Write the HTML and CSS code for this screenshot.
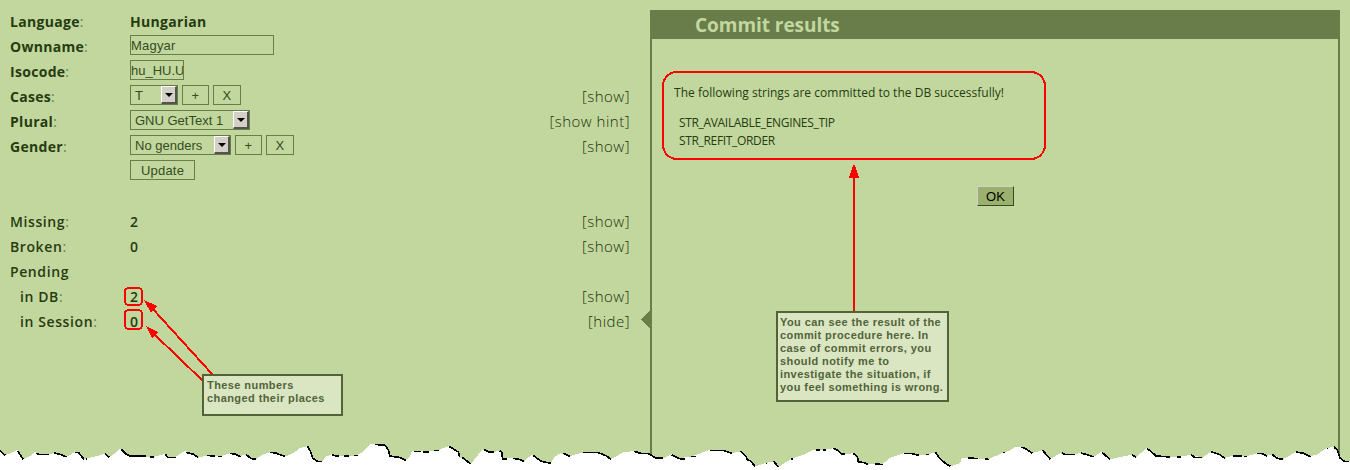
FILE: index.html
```
<!DOCTYPE html>
<html lang="en">
<head>
<meta charset="utf-8">
<title>Commit results</title>
<link rel="stylesheet" href="styles.css">
</head>
<body>
<div class="page">
  <main class="info">
    <div class="row strong"><span class="label"><b>Language</b>:</span><span class="value">Hungarian</span></div>
    <div class="row strong"><span class="label"><b>Ownname</b>:</span><span class="controls"><span class="field own">Magyar</span></span></div>
    <div class="row strong"><span class="label"><b>Isocode</b>:</span><span class="controls"><span class="field iso">hu_HU.U</span></span></div>
    <div class="row strong"><span class="label"><b>Cases</b>:</span><span class="controls"><span class="select cases">T<i class="drop"></i></span><span class="btn plus">+</span><span class="btn cross">X</span></span><a class="link">[show]</a></div>
    <div class="row strong"><span class="label"><b>Plural</b>:</span><span class="controls"><span class="select plural">GNU GetText 1<i class="drop"></i></span></span><a class="link">[show hint]</a></div>
    <div class="row strong"><span class="label"><b>Gender</b>:</span><span class="controls"><span class="select gender">No genders<i class="drop"></i></span><span class="btn plus">+</span><span class="btn cross">X</span></span><a class="link">[show]</a></div>
    <div class="row"><span class="label"></span><span class="controls"><span class="btn update">Update</span></span></div>
    <div class="row"></div>
    <div class="row"><span class="label"><b>Missing</b>:</span><span class="value">2</span><a class="link">[show]</a></div>
    <div class="row"><span class="label"><b>Broken</b>:</span><span class="value">0</span><a class="link">[show]</a></div>
    <div class="row"><span class="label"><b>Pending</b></span></div>
    <div class="row"><span class="label sub"><b>in DB</b>:</span><span class="value">2</span><a class="link">[show]</a></div>
    <div class="row"><span class="label sub"><b>in Session</b>:</span><span class="value">0</span><a class="link">[hide]</a></div>
  </main>
  <section class="panel">
    <h1 class="panel-title"><span>Commit results</span></h1>
    <div class="panel-body">
      <p class="message">The following strings are committed to the DB successfully!</p>
      <ul class="strings">
        <li>STR_AVAILABLE_ENGINES_TIP</li>
        <li>STR_REFIT_ORDER</li>
      </ul>
      <span class="ok">OK</span>
    </div>
  </section>

  <svg class="marks" width="1350" height="470" viewBox="0 0 1350 470">
    <path class="pointer" d="M650 311v17l-9-8.500z"/>
    <g class="outline">
      <rect x="663" y="72" width="382" height="87" rx="14"/>
      <rect x="125" y="288" width="17" height="17" rx="3.500"/>
      <rect x="125" y="310" width="17" height="19" rx="3.500"/>
      <path d="M854 311V175M212 374L152 308M203 381L154 334"/>
    </g>
    <path class="head" d="M853 165h2l4 13h-10zM144 300l13 6-6 7zM146 326l12 6-6 6z"/>
  </svg>
  <div class="note note-left"><span>These numbers</span><span>changed their places</span></div>
  <div class="note note-right"><span>You can see the result of the</span><span>commit procedure here. In</span><span>case of commit errors, you</span><span>should notify me to</span><span>investigate the situation, if</span><span>you feel something is wrong.</span></div>

  <svg class="torn" width="1350" height="40" viewBox="0 0 4050 120">
    <path class="paper" d="M0 120V62L16 76 35 68 52 60 70 88 95 75 105 66 115 73 150 73 165 69 200 80 225 66 235 69 250 88 290 78 313 72 328 81 345 70 360 55 390 78 435 81 460 81 495 72 503 82 528 80 555 62 595 83 625 76 660 79 690 70 720 78 740 74 750 86 768 87 785 75 810 66 855 80 875 72 900 54 923 48 938 84 955 95 966 94 978 80 995 73 1018 79
    1035 78 1070 76 1090 65 1112 42 1155 44 1170 78 1200 82 1217 90 1230 80 1235 63 1285 64 1315 60 1348 48 1375 66 1380 82 1412 102 1430 80 1448 58 1480 66 1503 62 1508 86 1540 84 1572 94 1595 74 1625 94 1652 100 1665 80 1680 70 1710 78 1750 67 1790 68 1820 78 1832 88 1870 67 1900 63 1915 69 1945 70 1970 83 1988 85 2015 73 2038 85
    2075 79 2125 61 2170 62 2195 70 2222 64 2240 86 2265 109 2300 98 2322 94 2335 111 2360 95 2375 86 2410 74 2440 59 2470 60 2500 55 2527 72 2560 70 2575 94 2605 103 2645 104 2670 84 2710 70 2755 76 2785 73 2806 67 2830 96 2852 109 2880 100 2885 85 2910 83 2965 88 3010 67 3030 62
    3045 50 3068 50 3095 70 3127 60 3150 88 3180 70 3190 73 3225 73 3245 68 3280 82 3302 66 3312 68 3330 88 3395 74 3408 82 3440 54 3470 79 3530 80 3575 75 3607 83 3635 64 3672 84 3700 77 3740 79 3770 70 3800 78 3818 73 3848 88 3888 66 3930 79 3955 72 3975 56 4002 50 4020 84 4032 94 4050 94V120z"/>
    <path class="shade" d="M0 63l16 13M52 62l18 26M109 69l6 4h32M162 69l18 4 20 8M226 67h9l17 21M259 86h3M315 72l13 10M364 58l14 14 12 6h48M451 80h10M496 73l7 9h24M559 67l22 6 14 10M621 76l24 3M655 79h10M690 70l15 2 17 8M738 73l14 12 16 3M810 67l17 2 29 11M923 48l5 12 3 2 7 22 14 10 15 1M995 75l22 4
    M1032 78h14M1062 76h12M1125 43l30 3 10 14 5 18 32 5 15 8M1242 64h20M1270 65h17M1302 61h15M1347 49l28 17 4 16M1387 82l25 20M1452 59l18 8 12-1M1499 63l6 2 3 22 12 1M1540 85l18 3 14 7M1599 76l23 17 30 7M1690 70l20 9M1750 67h42l28 11 12 10M1903 64l18 6 24 1 23 13 20 1M2015 75l24 11
    M2040 86h14M2073 79h14M2130 61h39l26 9M2222 64l17 17 2 8 11 4 13 16M2299 100h3M2321 94l15 18M2373 87h7M2448 59h12M2470 60h9M2500 55l14 7 13 11 7-1M2560 70l12 10 3 15 17 3 13 6M2624 101l24 3M2713 70l23 1 22 5M2778 73h8M2807 67l11 17 16 14 17 11M2903 83l30 3M2955 86l11 3M3010 67h6
    M3064 51l11 4 22 15M3128 61l23 27M3186 69l7 4h32M3242 69l19 5 20 7M3306 67l25 22M3395 73l14 10M3442 56l13 10 13 12 43 3M3530 80h12M3574 74l9 8 24 1M3634 65l26 9 14 11M3700 77l25 2M3732 79h10M3772 70h14l15 8M3816 73l16 12 16 3M3889 66l23 4 20 10M3980 55h4M4002 51l10 9 8 24 13 10h14"/>
  </svg>
</div>
</body>
</html>
```
FILE: styles.css
```
* { box-sizing: border-box; }
body { margin: 0; background: #c2d79e; }
.page {
  position: relative;
  display: flex;
  width: 1350px;
  height: 470px;
  overflow: hidden;
  color: #263c10;
  font-family: "Open Sans", sans-serif;
}
.info { width: 650px; padding: 9px 20px 0 10px; }
.row { display: flex; height: 25px; line-height: 25px; font-size: 15px; white-space: nowrap; }
.label { width: 120px; color: #697d4b; letter-spacing: .6px; font-size: 14px; }
.label b { color: #263c10; font-weight: 600; }
.strong .label, .strong .value { letter-spacing: .3px; }
.strong .label b, .strong .value { font-weight: 700; }
.sub { padding-left: 10px; }
.value { font-weight: 600; font-size: 14px; letter-spacing: .6px; }
.link { margin-left: auto; color: #1c310a; font-weight: 300; letter-spacing: .5px; }
.controls { display: flex; gap: 4px; padding-top: 1px; font: 13px/19px "Liberation Sans", sans-serif; }
.field, .select, .btn { height: 20px; border: 1px solid #697d4b; color: #344c20; letter-spacing: .2px; }
.field { overflow: hidden; }
.own { width: 144px; }
.iso { width: 54px; letter-spacing: 0; }
.select { display: flex; justify-content: space-between; padding-left: 4px; letter-spacing: 0; }
.cases { width: 48px; }
.plural { width: 120px; }
.gender { width: 101px; }
.drop {
  display: flex;
  align-items: center;
  justify-content: center;
  width: 16px;
  height: 18px;
  background: #d4d0c8;
  border: 1px solid #fff;
  border-right: 2px solid #55534e;
  border-bottom: 2px solid #55534e;
}
.drop::before { content: ""; border: 4px solid transparent; border-top-color: #000; border-bottom: 0; }
.btn { text-align: center; }
.plus { width: 27px; }
.cross { width: 28px; }
.update { width: 65px; }

.panel { width: 690px; height: 460px; margin-top: 10px; border: 2px solid #697d4b; border-top: 0; }
.panel-title { height: 29px; margin: 0; padding-left: 43px; background: #697d4b; color: #c2d79e; font-size: 19px; line-height: 31px; font-weight: 700; letter-spacing: -.05px; }
.panel-body { display: flex; flex-direction: column; padding: 45px 21px 0 22px; font-size: 12px; line-height: 18px; }
.message { margin: 0; letter-spacing: .02px; }
.strings { margin: 12px 0 0; padding: 0 0 0 5px; list-style: none; letter-spacing: -.33px; }
.ok {
  align-self: center;
  width: 37px;
  height: 20px;
  margin-top: 36px;
  border: 1px solid #d4d0c8;
  border-right-color: #344c20;
  border-bottom-color: #344c20;
  background: #9bb06c;
  color: #000;
  font: 13px/19px "Liberation Sans", sans-serif;
  text-align: center;
}

.marks { position: absolute; left: 0; top: 0; shape-rendering: crispEdges; }
.outline { fill: none; stroke: #f00; stroke-width: 2; }
.head { fill: #f00; }
.pointer { fill: #697d4b; }
.note {
  position: absolute;
  padding: 3px 2px;
  border: 2px solid #52633a;
  background: #d9e6c1;
  color: #52633a;
  font: bold 11px/13px "Liberation Sans", sans-serif;
  letter-spacing: .42px;
  white-space: nowrap;
}
.note span { display: block; width: max-content; }
.note-left { left: 202px; top: 374px; width: 141px; height: 42px; padding-left: 3px; }
.note-right { left: 776px; top: 311px; width: 173px; height: 91px; }
.torn { position: absolute; left: 0; top: 430px; shape-rendering: crispEdges; }
.paper { fill: #fff; }
.shade { fill: none; stroke: #000; stroke-width: 5; }
```
